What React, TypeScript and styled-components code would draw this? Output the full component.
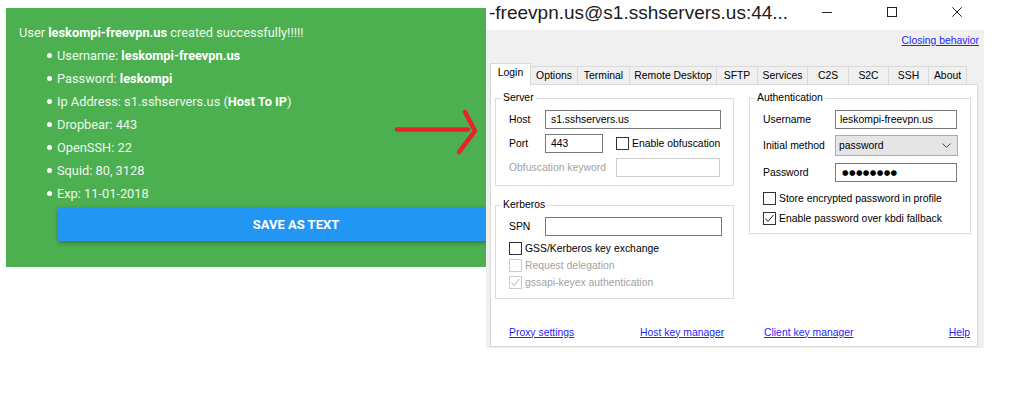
import React from "react";
import styled, { createGlobalStyle } from "styled-components";

const GlobalStyle = createGlobalStyle`
  html, body { margin: 0; padding: 0; background: #ffffff; }
  #root { width: 1024px; height: 400px; overflow: hidden; }
`;

const Page = styled.div`
  position: relative;
  display: flex;
  align-items: flex-start;
  width: 1024px;
  height: 400px;
  overflow: hidden;
`;

/* ---------- green result card ---------- */
const Card = styled.section`
  flex: none;
  box-sizing: border-box;
  width: 480px;
  height: 259px;
  margin: 8px 0 0 6px;
  padding: 13px 0 0 13px;
  background: #4caf50;
  overflow: hidden;
  color: #eef8ee;
  font-family: Roboto, "Liberation Sans", Arial, sans-serif;
  font-size: 12.8px;
`;

const Headline = styled.div`
  line-height: 23px;
  white-space: nowrap;
`;

const InfoList = styled.ul`
  list-style: none;
  margin: 0;
  padding: 0 0 0 38px;
`;

const InfoItem = styled.li`
  position: relative;
  line-height: 23px;
  white-space: nowrap;
  &::before {
    content: "";
    position: absolute;
    left: -10px;
    top: 9px;
    width: 5px;
    height: 5px;
    border-radius: 50%;
    background: #ffffff;
  }
`;

const Strong = styled.b`
  font-weight: 700;
  color: #ffffff;
`;

const SaveButton = styled.button`
  display: flex;
  align-items: center;
  justify-content: center;
  width: 476px;
  height: 34px;
  margin: 2px 0 0 39px;
  padding: 0;
  border: none;
  border-radius: 2px;
  background: #2196f3;
  color: #ffffff;
  font-family: Roboto, "Liberation Sans", Arial, sans-serif;
  font-size: 13px;
  font-weight: 700;
  box-shadow: 0 2px 4px rgba(0, 0, 0, 0.3);
`;

const ArrowMark = styled.svg`
  position: absolute;
  left: 390px;
  top: 105px;
`;

/* ---------- window ---------- */
const Win = styled.section`
  flex: none;
  width: 503px;
  display: flex;
  flex-direction: column;
  font-family: "Liberation Sans", Arial, sans-serif;
  font-size: 10.4px;
  color: #000000;
`;

const TitleBar = styled.header`
  display: flex;
  height: 30px;
`;

const TitleText = styled.div`
  flex: 1;
  padding-left: 3px;
  font-size: 19px;
  line-height: 26px;
  color: #1b1b1b;
  white-space: nowrap;
`;

const CaptionButton = styled.div`
  flex: none;
  width: 65px;
  height: 23px;
  display: flex;
  align-items: center;
  justify-content: center;
`;

const WinBody = styled.div`
  box-sizing: border-box;
  width: 498px;
  height: 318px;
  background: #f0f0f0;
  display: flex;
  flex-direction: column;
  padding: 0 6px 1px 4px;
`;

const ClosingRow = styled.div`
  height: 33px;
  box-sizing: border-box;
  padding-top: 4px;
  margin-right: -1px;
  display: flex;
  justify-content: flex-end;
  line-height: 13px;
`;

const Link = styled.span`
  color: #2626f2;
  text-decoration: underline;
  white-space: nowrap;
  cursor: pointer;
`;

const TabStrip = styled.div`
  display: flex;
  align-items: flex-end;
  height: 22px;
  margin-bottom: -1px;
  position: relative;
  z-index: 1;
`;

const Tab = styled.div<{ $active?: boolean; $w: number }>`
  box-sizing: border-box;
  width: ${(p) => p.$w}px;
  height: ${(p) => (p.$active ? 22 : 19)}px;
  display: flex;
  align-items: center;
  justify-content: center;
  padding-bottom: ${(p) => (p.$active ? 3 : 0)}px;
  border: 1px solid #d9d9d9;
  border-bottom-color: ${(p) => (p.$active ? "#ffffff" : "#d9d9d9")};
  background: ${(p) => (p.$active ? "#ffffff" : "#f0f0f0")};
  white-space: nowrap;
  & + & {
    margin-left: -1px;
  }
`;

const Panel = styled.div`
  flex: 1;
  box-sizing: border-box;
  background: #ffffff;
  border: 1px solid #d9d9d9;
  display: flex;
  flex-direction: column;
  padding: 13px 7px 4px 4px;
`;

const Columns = styled.div`
  display: flex;
  align-items: flex-start;
  gap: 15px;
`;

const Column = styled.div`
  display: flex;
  flex-direction: column;
  gap: 19px;
`;

const Group = styled.div<{ $w: number; $h: number }>`
  position: relative;
  box-sizing: border-box;
  width: ${(p) => p.$w}px;
  height: ${(p) => p.$h}px;
  border: 1px solid #dcdcdc;
  padding: 11px 0 0 13px;
`;

const GroupTitle = styled.span`
  position: absolute;
  top: -7px;
  left: 5px;
  padding: 0 2px;
  background: #ffffff;
  line-height: 12px;
`;

const FieldRow = styled.div<{ $mt?: number; $h?: number }>`
  display: flex;
  align-items: center;
  height: ${(p) => p.$h ?? 19}px;
  margin-top: ${(p) => p.$mt ?? 0}px;
`;

const FieldLabel = styled.span<{ $w: number; $muted?: boolean }>`
  flex: none;
  width: ${(p) => p.$w}px;
  color: ${(p) => (p.$muted ? "#a2a2a2" : "#000000")};
  white-space: nowrap;
`;

const TextBox = styled.div<{ $w: number; $disabled?: boolean; $pl?: number }>`
  flex: none;
  box-sizing: border-box;
  width: ${(p) => p.$w}px;
  height: 100%;
  border: 1px solid ${(p) => (p.$disabled ? "#cfcfcf" : "#7a7a7a")};
  background: #ffffff;
  padding-left: ${(p) => p.$pl ?? 4}px;
  display: flex;
  align-items: center;
  white-space: nowrap;
`;

const SelectBox = styled.div<{ $w: number }>`
  flex: none;
  box-sizing: border-box;
  width: ${(p) => p.$w}px;
  height: 100%;
  border: 1px solid #adadad;
  background: #e5e5e5;
  padding: 0 6px 0 3px;
  display: flex;
  align-items: center;
  justify-content: space-between;
`;

const Dots = styled.span`
  font-family: "DejaVu Sans", sans-serif;
  font-size: 7.5px;
  letter-spacing: 0.4px;
  color: #000000;
`;

const CheckRow = styled.div<{ $mt?: number; $h: number; $disabled?: boolean; $ml?: number }>`
  display: flex;
  align-items: center;
  gap: 3px;
  height: ${(p) => p.$h}px;
  margin-top: ${(p) => p.$mt ?? 0}px;
  margin-left: ${(p) => p.$ml ?? 0}px;
  color: ${(p) => (p.$disabled ? "#a2a2a2" : "#000000")};
  white-space: nowrap;
`;

const CheckBox = styled.span<{ $disabled?: boolean }>`
  flex: none;
  box-sizing: border-box;
  width: 13px;
  height: 13px;
  border: 1px solid ${(p) => (p.$disabled ? "#cccccc" : "#333333")};
  background: #ffffff;
  display: flex;
  align-items: center;
  justify-content: center;
`;

const LinkRow = styled.div`
  margin-top: auto;
  height: 20px;
  display: grid;
  grid-template-columns: 131px 124px 1fr auto;
  align-items: center;
  padding-left: 14px;
`;

const Check: React.FC<{ checked?: boolean; disabled?: boolean }> = ({ checked, disabled }) => (
  <CheckBox $disabled={disabled}>
    {checked && (
      <svg width="11" height="11" viewBox="0 0 11 11">
        <polyline
          points="1.5,5.5 4,8.5 9.5,2"
          fill="none"
          stroke={disabled ? "#b5b5b5" : "#222222"}
          strokeWidth="1"
        />
      </svg>
    )}
  </CheckBox>
);

const tabs = [
  { label: "Login", w: 41, active: true },
  { label: "Options", w: 48 },
  { label: "Terminal", w: 53 },
  { label: "Remote Desktop", w: 88 },
  { label: "SFTP", w: 42 },
  { label: "Services", w: 51 },
  { label: "C2S", w: 42 },
  { label: "S2C", w: 41 },
  { label: "SSH", w: 41 },
  { label: "About", w: 39 },
];

const info: React.ReactNode[] = [
  <>Username: <Strong>leskompi-freevpn.us</Strong></>,
  <>Password: <Strong>leskompi</Strong></>,
  <>Ip Address: s1.sshservers.us (<Strong>Host To IP</Strong>)</>,
  <>Dropbear: 443</>,
  <>OpenSSH: 22</>,
  <>Squid: 80, 3128</>,
  <>Exp: 11-01-2018</>,
];

export default function App() {
  return (
    <>
      <GlobalStyle />
      <Page>
        <Card>
          <Headline>
            User <Strong>leskompi-freevpn.us</Strong> created successfully!!!!!
          </Headline>
          <InfoList>
            {info.map((item, i) => (
              <InfoItem key={i}>{item}</InfoItem>
            ))}
          </InfoList>
          <SaveButton>SAVE AS TEXT</SaveButton>
        </Card>

        <Win>
          <TitleBar>
            <TitleText>-freevpn.us@s1.sshservers.us:44...</TitleText>
            <CaptionButton>
              <svg width="10" height="10" viewBox="0 0 10 10">
                <line x1="0" y1="5.5" x2="10" y2="5.5" stroke="#222" strokeWidth="1" />
              </svg>
            </CaptionButton>
            <CaptionButton>
              <svg width="10" height="10" viewBox="0 0 10 10">
                <rect x="0.5" y="0.5" width="9" height="9" fill="none" stroke="#222" strokeWidth="1" />
              </svg>
            </CaptionButton>
            <CaptionButton>
              <svg width="10" height="10" viewBox="0 0 10 10">
                <path d="M0.3 0.3 L9.7 9.7 M9.7 0.3 L0.3 9.7" stroke="#222" strokeWidth="1" />
              </svg>
            </CaptionButton>
          </TitleBar>

          <WinBody>
            <ClosingRow>
              <Link>Closing behavior</Link>
            </ClosingRow>

            <TabStrip>
              {tabs.map((t) => (
                <Tab key={t.label} $w={t.w} $active={t.active}>
                  {t.label}
                </Tab>
              ))}
            </TabStrip>

            <Panel>
              <Columns>
                <Column>
                  <Group $w={239} $h={88}>
                    <GroupTitle>Server</GroupTitle>
                    <FieldRow>
                      <FieldLabel $w={36}>Host</FieldLabel>
                      <TextBox $w={176} $pl={5}>s1.sshservers.us</TextBox>
                    </FieldRow>
                    <FieldRow $mt={5}>
                      <FieldLabel $w={36}>Port</FieldLabel>
                      <TextBox $w={58} $pl={5}>443</TextBox>
                      <CheckRow $h={19} $ml={13}>
                        <Check />
                        Enable obfuscation
                      </CheckRow>
                    </FieldRow>
                    <FieldRow $mt={5}>
                      <FieldLabel $w={107} $muted>
                        Obfuscation keyword
                      </FieldLabel>
                      <TextBox $w={104} $disabled />
                    </FieldRow>
                  </Group>

                  <Group $w={239} $h={94}>
                    <GroupTitle>Kerberos</GroupTitle>
                    <FieldRow>
                      <FieldLabel $w={36}>SPN</FieldLabel>
                      <TextBox $w={177} />
                    </FieldRow>
                    <CheckRow $h={17} $mt={4}>
                      <Check />
                      GSS/Kerberos key exchange
                    </CheckRow>
                    <CheckRow $h={17} $disabled>
                      <Check disabled />
                      Request delegation
                    </CheckRow>
                    <CheckRow $h={17} $disabled>
                      <Check checked disabled />
                      gssapi-keyex authentication
                    </CheckRow>
                  </Group>
                </Column>

                <Column>
                  <Group $w={222} $h={136}>
                    <GroupTitle>Authentication</GroupTitle>
                    <FieldRow>
                      <FieldLabel $w={72}>Username</FieldLabel>
                      <TextBox $w={122}>leskompi-freevpn.us</TextBox>
                    </FieldRow>
                    <FieldRow $mt={6} $h={21}>
                      <FieldLabel $w={72}>Initial method</FieldLabel>
                      <SelectBox $w={123}>
                        <span>password</span>
                        <svg width="9" height="5" viewBox="0 0 9 5">
                          <polyline points="0.5,0.5 4.5,4.5 8.5,0.5" fill="none" stroke="#444" strokeWidth="1" />
                        </svg>
                      </SelectBox>
                    </FieldRow>
                    <FieldRow $mt={7}>
                      <FieldLabel $w={72}>Password</FieldLabel>
                      <TextBox $w={122} $pl={6}>
                        <Dots>●●●●●●●●</Dots>
                      </TextBox>
                    </FieldRow>
                    <CheckRow $h={20} $mt={6}>
                      <Check />
                      Store encrypted password in profile
                    </CheckRow>
                    <CheckRow $h={20}>
                      <Check checked />
                      Enable password over kbdi fallback
                    </CheckRow>
                  </Group>
                </Column>
              </Columns>

              <LinkRow>
                <Link>Proxy settings</Link>
                <Link>Host key manager</Link>
                <Link>Client key manager</Link>
                <Link>Help</Link>
              </LinkRow>
            </Panel>
          </WinBody>
        </Win>

        <ArrowMark width="95" height="55" viewBox="0 0 95 55">
          <g fill="none" stroke="#e8212b" strokeWidth="4.5" strokeLinecap="round" strokeLinejoin="round">
            <line x1="7" y1="24.5" x2="78" y2="24.5" />
            <polyline points="75,7 85,26 69,47" />
          </g>
        </ArrowMark>
      </Page>
    </>
  );
}
